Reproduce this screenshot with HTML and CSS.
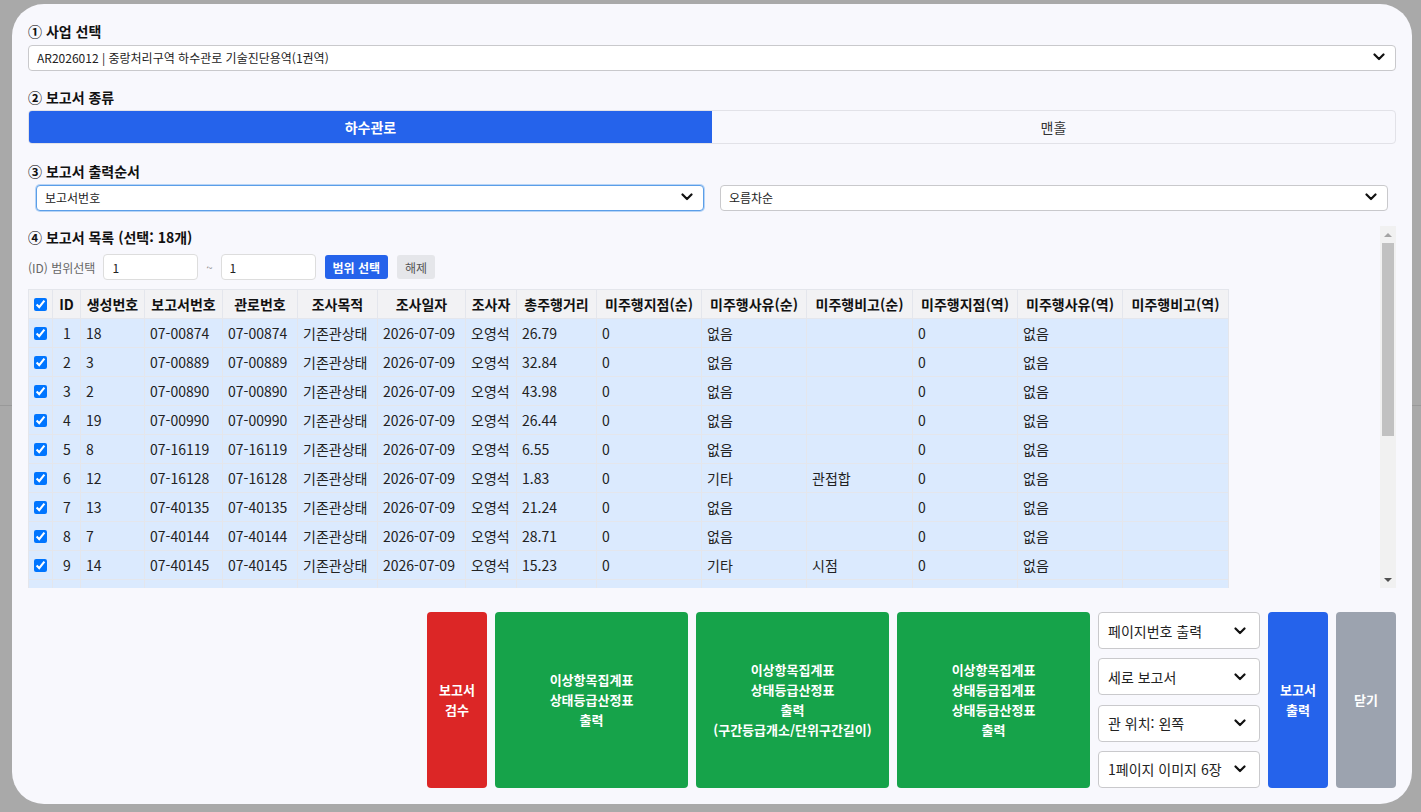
FILE: index.html
```html
<!DOCTYPE html>
<html lang="ko">
<head>
    <meta charset="UTF-8">
    <meta name="viewport" content="width=device-width, initial-scale=1.0">
    <title>보고서 출력</title>
    <link rel="stylesheet" href="styles.css">
</head>
<body>
    <div class="page-dim"></div>

    <div class="modal">
        <section class="field">
            <h3 class="field-title">① 사업 선택</h3>
            <div class="select-box">
                <select class="select">
                    <option>AR2026012 | 중랑처리구역 하수관로 기술진단용역(1권역)</option>
                </select>
                <svg class="chevron" width="12" height="8" viewBox="0 0 12 8"><path d="M1.5 1.5 L6 6 L10.5 1.5" /></svg>
            </div>
        </section>

        <section class="field">
            <h3 class="field-title">② 보고서 종류</h3>
            <div class="type-tabs">
                <button class="type-tab active">하수관로</button>
                <button class="type-tab">맨홀</button>
            </div>
        </section>

        <section class="field">
            <h3 class="field-title">③ 보고서 출력순서</h3>
            <div class="order-row">
                <div class="select-box">
                    <select class="select focused">
                        <option>보고서번호</option>
                    </select>
                    <svg class="chevron" width="12" height="8" viewBox="0 0 12 8"><path d="M1.5 1.5 L6 6 L10.5 1.5" /></svg>
                </div>
                <div class="select-box">
                    <select class="select">
                        <option>오름차순</option>
                    </select>
                    <svg class="chevron" width="12" height="8" viewBox="0 0 12 8"><path d="M1.5 1.5 L6 6 L10.5 1.5" /></svg>
                </div>
            </div>
        </section>

        <div class="list-wrap">
            <div class="list-scroll">
                <h3 class="field-title">④ 보고서 목록 (선택: 18개)</h3>
                <div class="range-row">
                    <span class="range-label">(ID) 범위선택</span>
                    <input class="range-input" type="text" value="1">
                    <span class="range-tilde">~</span>
                    <input class="range-input" type="text" value="1">
                    <button class="small-btn primary">범위 선택</button>
                    <button class="small-btn">해제</button>
                </div>

                <table class="report-table">
                    <colgroup>
                        <col class="w-check">
                        <col class="w-id">
                        <col class="w-gen">
                        <col class="w-report">
                        <col class="w-pipe">
                        <col class="w-purpose">
                        <col class="w-date">
                        <col class="w-person">
                        <col class="w-dist">
                        <col class="w-skip"><col class="w-skip"><col class="w-skip-wide">
                        <col class="w-skip"><col class="w-skip"><col class="w-skip-wide">
                    </colgroup>
                    <thead>
                        <tr>
                            <th class="col-check"><input type="checkbox" checked></th>
                            <th class="col-id">ID</th>
                            <th>생성번호</th>
                            <th>보고서번호</th>
                            <th>관로번호</th>
                            <th>조사목적</th>
                            <th>조사일자</th>
                            <th>조사자</th>
                            <th>총주행거리</th>
                            <th>미주행지점(순)</th>
                            <th>미주행사유(순)</th>
                            <th>미주행비고(순)</th>
                            <th>미주행지점(역)</th>
                            <th>미주행사유(역)</th>
                            <th>미주행비고(역)</th>
                        </tr>
                    </thead>
                    <tbody id="reportRows"></tbody>
                </table>
            </div>

            <!-- scrollbar drawn by hand, the native one is hidden in print/headless -->
            <div class="scrollbar" aria-hidden="true">
                <span class="scroll-arrow up"></span>
                <span class="scroll-thumb"></span>
                <span class="scroll-arrow down"></span>
            </div>
        </div>

        <div class="action-bar">
            <button class="action-btn red">보고서<br>검수</button>
            <button class="action-btn green">이상항목집계표<br>상태등급산정표<br>출력</button>
            <button class="action-btn green">이상항목집계표<br>상태등급산정표<br>출력<br>(구간등급개소/단위구간길이)</button>
            <button class="action-btn green">이상항목집계표<br>상태등급집계표<br>상태등급산정표<br>출력</button>
            <div class="option-stack">
                <div class="select-box tall">
                    <select class="select"><option>페이지번호 출력</option></select>
                    <svg class="chevron" width="12" height="8" viewBox="0 0 12 8"><path d="M1.5 1.5 L6 6 L10.5 1.5" /></svg>
                </div>
                <div class="select-box tall">
                    <select class="select"><option>세로 보고서</option></select>
                    <svg class="chevron" width="12" height="8" viewBox="0 0 12 8"><path d="M1.5 1.5 L6 6 L10.5 1.5" /></svg>
                </div>
                <div class="select-box tall">
                    <select class="select"><option>관 위치: 왼쪽</option></select>
                    <svg class="chevron" width="12" height="8" viewBox="0 0 12 8"><path d="M1.5 1.5 L6 6 L10.5 1.5" /></svg>
                </div>
                <div class="select-box tall">
                    <select class="select"><option>1페이지 이미지 6장</option></select>
                    <svg class="chevron" width="12" height="8" viewBox="0 0 12 8"><path d="M1.5 1.5 L6 6 L10.5 1.5" /></svg>
                </div>
            </div>
            <button class="action-btn blue">보고서<br>출력</button>
            <button class="action-btn gray">닫기</button>
        </div>
    </div>

    <script>
        const reports = [
            [1, 18, '07-00874', 26.79, '없음', ''],
            [2, 3, '07-00889', 32.84, '없음', ''],
            [3, 2, '07-00890', 43.98, '없음', ''],
            [4, 19, '07-00990', 26.44, '없음', ''],
            [5, 8, '07-16119', 6.55, '없음', ''],
            [6, 12, '07-16128', 1.83, '기타', '관접합'],
            [7, 13, '07-40135', 21.24, '없음', ''],
            [8, 7, '07-40144', 28.71, '없음', ''],
            [9, 14, '07-40145', 15.23, '기타', '시점'],
            [10, 5, '07-40152', 18.62, '없음', ''],
            [11, 9, '07-40160', 22.07, '없음', ''],
            [12, 11, '07-40168', 9.41, '없음', ''],
            [13, 1, '07-40171', 35.16, '없음', ''],
            [14, 4, '07-40183', 12.90, '없음', ''],
            [15, 6, '07-40190', 27.35, '없음', ''],
            [16, 10, '07-40204', 31.58, '없음', ''],
            [17, 15, '07-40211', 8.74, '없음', ''],
            [18, 16, '07-40226', 19.02, '없음', '']
        ];

        const tbody = document.getElementById('reportRows');
        tbody.innerHTML = reports.map(r => `
            <tr>
                <td class="col-check"><input type="checkbox" checked></td>
                <td class="col-id">${r[0]}</td>
                <td>${r[1]}</td>
                <td>${r[2]}</td>
                <td>${r[2]}</td>
                <td>기존관상태</td>
                <td>2026-07-09</td>
                <td>오영석</td>
                <td>${r[3].toFixed(2)}</td>
                <td>0</td>
                <td>${r[4]}</td>
                <td>${r[5]}</td>
                <td>0</td>
                <td>없음</td>
                <td></td>
            </tr>`).join('');
    </script>
</body>
</html>
```

FILE: styles.css
```css
* {
    box-sizing: border-box;
}

body {
    margin: 0;
    background: #a9a9a9;
    font-family: "Noto Sans CJK KR", "Noto Sans", sans-serif;
    color: #222;
    overflow: hidden;
}

.page-dim {
    height: 406px;
    border-bottom: 1px solid #999;
}

.modal {
    position: fixed;
    top: 4px;
    left: 12px;
    width: 1400px;
    height: 800px;
    padding: 16px;
    background: #f8f8fd;
    border-radius: 32px;
    display: flex;
    flex-direction: column;
}

.field {
    margin-bottom: 16px;
}

.field-title {
    margin: 0 0 2px;
    font-size: 14px;
    line-height: 22px;
    font-weight: 700;
    color: #111;
}

/* selects */
.select-box {
    position: relative;
    height: 26px;
}

.select {
    appearance: none;
    -webkit-appearance: none;
    width: 100%;
    height: 100%;
    margin: 0;
    padding: 0 28px 0 8px;
    background: #fff;
    border: 1px solid #c9c9cc;
    border-radius: 4px;
    font-family: inherit;
    font-size: 12px;
    color: #222;
    outline: none;
}

.select.focused {
    border-color: #5b9ee8;
    box-shadow: 0 0 0 1px #b7d4f6;
}

.chevron {
    position: absolute;
    right: 11px;
    top: 50%;
    margin-top: -4px;
    pointer-events: none;
}

.chevron path {
    fill: none;
    stroke: #111;
    stroke-width: 2.2;
    stroke-linecap: round;
    stroke-linejoin: round;
}

.select-box.tall {
    height: 37px;
}

.select-box.tall .select {
    font-size: 14px;
    padding-left: 9px;
}

.select-box.tall .chevron {
    right: 14px;
}

/* report type tabs */
.type-tabs {
    display: grid;
    grid-template-columns: 1fr 1fr;
    height: 34px;
    border: 1px solid #e2e2e8;
    border-radius: 4px;
    overflow: hidden;
}

.type-tab {
    border: none;
    background: transparent;
    font-family: inherit;
    font-size: 14px;
    color: #333;
}

.type-tab.active {
    background: #2563eb;
    color: #fff;
    font-weight: 600;
}

.order-row {
    display: grid;
    grid-template-columns: 1fr 1fr;
    gap: 16px;
    padding: 0 8px;
}

/* report list */
.list-wrap {
    position: relative;
    flex: 1;
    min-height: 0;
}

.list-scroll {
    height: 100%;
    overflow-y: auto;
    scrollbar-width: none;
}

.list-scroll::-webkit-scrollbar {
    display: none;
}

.scrollbar {
    position: absolute;
    top: 0;
    right: 0;
    bottom: 0;
    width: 16px;
    background: #f1f1f1;
    display: flex;
    flex-direction: column;
}

.scroll-arrow {
    height: 17px;
    display: flex;
    align-items: center;
    justify-content: center;
}

.scroll-arrow::before {
    content: "";
    border-left: 4px solid transparent;
    border-right: 4px solid transparent;
}

.scroll-arrow.up::before {
    border-bottom: 4px solid #a3a3a3;
}

.scroll-arrow.down {
    margin-top: auto;
}

.scroll-arrow.down::before {
    border-top: 4px solid #505050;
}

.scroll-thumb {
    height: 193px;
    margin: 0 2px;
    background: #c1c1c1;
}

.range-row {
    display: flex;
    align-items: center;
    gap: 8px;
    height: 26px;
    margin: 6px 0 9px;
}

.range-label {
    font-size: 12px;
    color: #666;
}

.range-input {
    width: 95px;
    height: 26px;
    padding: 0 8px;
    border: 1px solid #ddd;
    border-radius: 4px;
    background: #fff;
    font-family: inherit;
    font-size: 12px;
    color: #222;
}

.range-tilde {
    font-size: 11px;
    color: #888;
}

.small-btn {
    height: 24px;
    margin-left: 1px;
    padding: 0 8px;
    border: none;
    border-radius: 3px;
    background: #e5e6ea;
    color: #555;
    font-family: inherit;
    font-size: 12px;
}

.small-btn.primary {
    background: #2563eb;
    color: #fff;
    font-weight: 700;
}

.report-table {
    table-layout: fixed;
    width: 1200px;
    border-collapse: collapse;
    font-size: 14px;
    line-height: 20px;
    white-space: nowrap;
}

.w-check { width: 24px; }
.w-id { width: 28px; }
.w-gen { width: 64px; }
.w-report { width: 78px; }
.w-pipe { width: 75px; }
.w-purpose { width: 80px; }
.w-date { width: 88px; }
.w-person { width: 51px; }
.w-dist { width: 80px; }
.w-skip { width: 105px; }
.w-skip-wide { width: 106px; }

.report-table th,
.report-table td {
    padding: 4px 4px 4px 5px;
    border: 1px solid #e4e6ec;
    text-align: left;
    overflow: hidden;
}

.report-table th {
    padding: 4px 2px;
    background: #f2f2f4;
    font-weight: 700;
    text-align: center;
    color: #111;
}

.report-table tbody tr {
    background: #dbeafe;
}

.report-table .col-check {
    padding: 4px 5px;
    text-align: center;
}

.report-table .col-id {
    text-align: center;
}

.report-table input[type="checkbox"] {
    margin: 0;
    width: 13px;
    height: 13px;
    vertical-align: -1px;
}

/* bottom actions */
.action-bar {
    display: flex;
    justify-content: flex-end;
    gap: 8px;
    height: 176px;
    margin-top: 24px;
    flex-shrink: 0;
}

.action-btn {
    width: 193px;
    border: none;
    border-radius: 4px;
    color: #fff;
    font-family: inherit;
    font-size: 13px;
    font-weight: 700;
    line-height: 20px;
}

.action-btn.red {
    width: 60px;
    background: #dc2626;
}

.action-btn.green {
    background: #16a34a;
}

.action-btn.blue {
    width: 60px;
    background: #2563eb;
}

.action-btn.gray {
    width: 60px;
    background: #9ca3af;
}

.option-stack {
    width: 162px;
    display: flex;
    flex-direction: column;
    justify-content: space-between;
}
```
